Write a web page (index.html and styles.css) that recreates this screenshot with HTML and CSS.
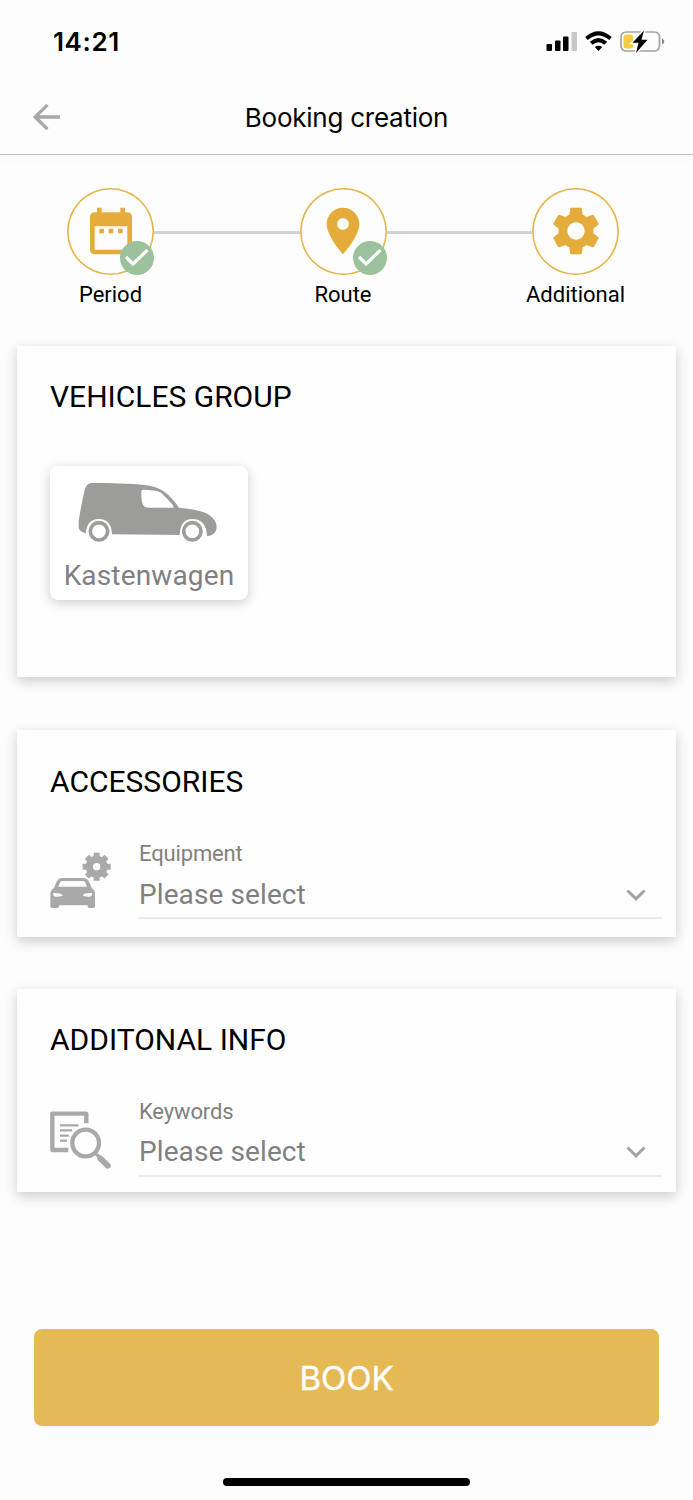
FILE: index.html
```html
<!DOCTYPE html>
<html lang="en">

	<head>
		<meta charset="UTF-8">
		<title>Booking creation</title>
		<link rel="stylesheet" href="styles.css">
	</head>

	<body>
		<div class="status">
			<span class="time">14:21</span>
			<svg class="status-icons" width="120" height="24" viewBox="0 0 120 24">
				<rect x="0.5" y="14" width="5.5" height="7" rx="1"/>
				<rect x="9" y="10.5" width="5.5" height="10.5" rx="1"/>
				<rect x="17" y="6.500" width="5.500" height="14.5" rx="1"/>
				<rect x="25.500" y="2" width="5.500" height="19" rx="1" fill="#c8c8c8"/>
				<g fill="none" stroke="#000" stroke-width="4">
					<path d="M40.500 8.500Q52.500 -1.800 64.500 8.500"/>
					<path d="M45.200 13.300Q52.500 7 59.800 13.300"/>
				</g>
				<path d="M48.800 17.100Q52.500 14.200 56.200 17.100L52.500 21Z"/>
				<rect x="75" y="2" width="38.500" height="19" rx="5" fill="none" stroke="#a3a3a3" stroke-width="1.700"/>
				<path d="M116 8.500q2.300 1 2.300 3t-2.300 3z" fill="#8a8a8a"/>
				<rect x="77.500" y="4.500" width="9.500" height="14" rx="2.500" fill="#f7cb46"/>
				<path d="M98 0.500L86.500 12.800H92.500L90 23L101.500 9.800H95.500Z" stroke="#fdfdfd" stroke-width="3"/>
				<path d="M98 0.500L86.500 12.800H92.500L90 23L101.500 9.800H95.500Z"/>
			</svg>
		</div>

		<div class="header">
			<svg class="back" width="28" height="28" viewBox="0 0 28 28">
				<path d="M27 14H2M14.500 1.800L2.200 14L14.500 26.200"/>
			</svg>
			<h1>Booking creation</h1>
		</div>

		<div class="steps">
			<div class="step">
				<div class="circle">
					<svg class="step-icon" viewBox="0 0 24 24">
						<path d="M9 11H7v2h2v-2zm4 0h-2v2h2v-2zm4 0h-2v2h2v-2zm2-7h-1V2h-2v2H8V2H6v2H5c-1.110 0-1.990.9-1.990 2L3 20c0 1.100.89 2 2 2h14c1.100 0 2-.9 2-2V6c0-1.100-.9-2-2-2zm0 16H5V10h14v10z"/>
					</svg>
					<svg class="check" viewBox="0 0 34 34">
						<circle cx="17" cy="17" r="17"/>
						<path d="M6 16L13 23L27.500 9"/>
					</svg>
				</div>
				<span>Period</span>
			</div>
			<div class="line"></div>
			<div class="step">
				<div class="circle">
					<svg class="step-icon" viewBox="0 0 24 24">
						<path d="M12 2C8.130 2 5 5.130 5 9c0 5.250 7 13 7 13s7-7.750 7-13c0-3.870-3.130-7-7-7zm0 9.500c-1.380 0-2.500-1.120-2.500-2.500s1.120-2.500 2.500-2.500 2.500 1.120 2.500 2.500-1.120 2.500-2.500 2.500z"/>
					</svg>
					<svg class="check" viewBox="0 0 34 34">
						<circle cx="17" cy="17" r="17"/>
						<path d="M6 16L13 23L27.500 9"/>
					</svg>
				</div>
				<span>Route</span>
			</div>
			<div class="line"></div>
			<div class="step">
				<div class="circle">
					<svg class="step-icon" viewBox="0 0 24 24">
						<path d="M19.430 12.980c.04-.32.07-.64.07-.98s-.03-.66-.07-.98l2.110-1.650c.19-.15.24-.42.12-.64l-2-3.460c-.12-.22-.39-.3-.61-.22l-2.490 1c-.52-.4-1.080-.73-1.690-.98l-.38-2.650C14.460 2.180 14.250 2 14 2h-4c-.25 0-.46.18-.49.42l-.38 2.650c-.61.25-1.170.59-1.690.98l-2.490-1c-.23-.09-.49 0-.61.22l-2 3.460c-.13.22-.07.49.12.64l2.110 1.650c-.04.32-.07.65-.07.98s.03.66.07.98l-2.110 1.650c-.19.15-.24.42-.12.64l2 3.460c.12.22.39.3.61.22l2.490-1c.52.4 1.080.73 1.690.98l.38 2.650c.03.24.24.42.49.42h4c.25 0 .46-.18.49-.42l.38-2.650c.61-.25 1.170-.59 1.690-.98l2.490 1c.23.09.49 0 .61-.22l2-3.460c.12-.22.07-.49-.12-.64l-2.110-1.650zM12 15.700c-2.040 0-3.700-1.660-3.700-3.700s1.660-3.700 3.700-3.700 3.700 1.660 3.700 3.700-1.660 3.700-3.700 3.700z"/>
					</svg>
				</div>
				<span>Additional</span>
			</div>
		</div>

		<div class="card vehicles">
			<h2>VEHICLES GROUP</h2>
			<div class="tile">
				<svg width="142" height="64" viewBox="54 30 426 192">
					<path fill="#9c9c9a" fill-rule="evenodd" d="M98 39C160 38 230 41 272 47Q297 51 316 65Q340 83 360 113Q400 116 430 125Q456 133 468 153Q475 165 472 178Q468 196 444 199Q442 147 399 147Q364 147 362 195L159 193Q157 147 120 147Q84 147 80 190Q61 184 59 174V154Q65 112 77 60Q82 40 98 39ZM252 59Q247 59 247 66Q246 99 255 109Q259 113 268 113H341Q346 113 342 106Q323 83 306 68Q294 60 252 59Z"/>
					<circle cx="120" cy="184" r="26" fill="none" stroke="#9c9c9a" stroke-width="11"/>
					<circle cx="400" cy="184" r="26" fill="none" stroke="#9c9c9a" stroke-width="11"/>
				</svg>
				<span>Kastenwagen</span>
			</div>
		</div>

		<div class="card accessories">
			<h2>ACCESSORIES</h2>
			<div class="row">
				<svg width="61" height="57" viewBox="150 96 183 171" fill="#a9a9a9">
					<path fill-rule="evenodd" d="M187 174H249Q262 174 268 187L275 204Q285 210 285 222V259Q285 264 280 264H267Q263 264 263 259V256H177V259Q177 264 172 264H156Q151 264 151 259V222Q151 210 162 204L169 187Q175 174 187 174ZM188 183Q181 183 179 190L175 200H261L257 190Q255 183 248 183ZM160 219Q158 229 167 230Q182 231 189 226Q181 217 160 219ZM276 219Q278 229 269 230Q254 231 247 226Q255 217 276 219Z"/>
					<circle cx="290" cy="140" r="22" fill="none" stroke="#a9a9a9" stroke-width="22"/>
					<path fill="none" stroke="#a9a9a9" stroke-width="18" d="M290 98V116M290 164V182M248 140H266M314 140H332M260.500 110.500L273 123M307 157L319.500 169.500M260.500 169.500L273 157M307 123L319.500 110.500"/>
				</svg>
				<div class="select">
					<label>Equipment</label>
					<div class="value">
						<span>Please select</span>
						<svg width="20" height="12" viewBox="0 0 20 12"><path d="M1.500 1.500L10 9.800L18.500 1.500"/></svg>
					</div>
				</div>
			</div>
		</div>

		<div class="card info">
			<h2>ADDITONAL INFO</h2>
			<div class="row">
				<svg width="61" height="58" viewBox="150 95 183 174" fill="none" stroke="#a9a9a9">
					<path stroke-width="13" stroke-linejoin="round" d="M259 132V103H157V212H205"/>
					<path stroke-width="7" d="M180 138H235M180 153H216M180 169H206M180 184H201"/>
					<circle cx="257" cy="191" r="40" stroke-width="13"/>
					<path stroke-width="10" d="M284 220L299 234"/>
					<path stroke-width="18" stroke-linecap="round" d="M301 237L323 259"/>
				</svg>
				<div class="select">
					<label>Keywords</label>
					<div class="value">
						<span>Please select</span>
						<svg width="20" height="12" viewBox="0 0 20 12"><path d="M1.500 1.500L10 9.800L18.500 1.500"/></svg>
					</div>
				</div>
			</div>
		</div>

		<button class="book">BOOK</button>
		<div class="home"></div>
	</body>

</html>
```
FILE: styles.css
```css
* {
	margin: 0;
	padding: 0;
	box-sizing: border-box;
}

body {
	width: 693px;
	height: 1500px;
	background: #fdfdfd;
	font-family: Roboto, sans-serif;
	color: #000;
	overflow: hidden;
}

svg {
	display: block;
	flex-shrink: 0;
}

.status {
	height: 80px;
	padding: 3px 27px 0 53px;
	display: flex;
	align-items: center;
	justify-content: space-between;
}

.time {
	font: 600 26px Inter, sans-serif;
	letter-spacing: 0.6px;
}

.status-icons {
	margin-top: 1px;
}

.header {
	height: 75px;
	padding: 0 34px;
	display: grid;
	grid-template-columns: 28px 1fr 28px;
	align-items: center;
	border-bottom: 1px solid #bdbdbd;
	box-shadow: 0 6px 6px rgba(0, 0, 0, 0.02);
}

.header h1 {
	font: 400 26px Inter, sans-serif;
	letter-spacing: -0.25px;
	text-align: center;
	padding-top: 1px;
}

.back {
	margin-left: -1px;
	fill: none;
	stroke: #a9a9a9;
	stroke-width: 3.3;
}

.steps {
	height: 191px;
	padding: 33px 74px 0 67px;
	display: flex;
	align-items: flex-start;
}

.step {
	width: 87px;
	display: flex;
	flex-direction: column;
	align-items: center;
}

.circle {
	width: 87px;
	height: 87px;
	border-radius: 50%;
	box-shadow: inset 0 0 0 1.6px #e6b548;
	display: flex;
	align-items: center;
	justify-content: center;
	position: relative;
}

.step-icon {
	width: 56px;
	height: 56px;
	margin-bottom: 1px;
	fill: #e4ad3b;
}

.check {
	position: absolute;
	right: 0;
	bottom: 0;
	width: 34px;
	height: 34px;
	fill: #9bc29d;
}

.check path {
	fill: none;
	stroke: #fff;
	stroke-width: 3.2;
}

.step span {
	margin-top: 7px;
	font-size: 22px;
	line-height: 26px;
	white-space: nowrap;
}

.line {
	flex: 1;
	height: 3px;
	margin-top: 43px;
	background: #d3d3d3;
}

.card {
	margin: 0 17px;
	padding: 33px 14px 0 33px;
	background: #fefefe;
	box-shadow: 0 4px 12px rgba(0, 0, 0, 0.2);
}

.card h2 {
	font-size: 30px;
	font-weight: 400;
	line-height: 36px;
}

.vehicles {
	height: 331px;
	margin-bottom: 53px;
}

.tile {
	width: 198px;
	height: 134px;
	margin-top: 51px;
	padding-top: 14px;
	display: flex;
	flex-direction: column;
	align-items: center;
	border-radius: 8px;
	background: #fff;
	box-shadow: 0 3px 12px rgba(0, 0, 0, 0.2);
}

.tile svg {
	margin-left: -2px;
}

.tile span {
	margin-top: 15px;
	font-size: 28px;
	line-height: 34px;
	letter-spacing: 0.15px;
	color: #808080;
}

.accessories {
	height: 207px;
	padding-top: 34px;
	margin-bottom: 52px;
}

.info {
	height: 203px;
	margin-bottom: 137px;
}

.row {
	margin-top: 40px;
	display: flex;
	align-items: flex-start;
	gap: 28px;
}

.row > svg {
	margin-top: 13px;
}

.accessories .row > svg {
	margin-top: 12px;
}

.select {
	flex: 1;
	height: 79px;
	padding-top: 1px;
	border-bottom: 2px solid #e9e9e9;
}

.select label {
	display: block;
	font-size: 22px;
	line-height: 26px;
	letter-spacing: -0.15px;
	color: #808080;
}

.value {
	margin-top: 10px;
	padding-right: 16px;
	display: flex;
	align-items: center;
	justify-content: space-between;
	font-size: 28px;
	line-height: 34px;
	letter-spacing: 0.1px;
	color: #808080;
}

.accessories .value {
	margin-top: 11px;
}

.value svg {
	fill: none;
	stroke: #a3a3a3;
	stroke-width: 3;
}

.book {
	display: block;
	width: 625px;
	height: 97px;
	margin: 0 34px 52px;
	border: none;
	border-radius: 8px;
	background: #e5b955;
	color: #fff;
	font: 400 33px Inter, sans-serif;
	-webkit-text-stroke: 0.4px #fff;
}

.home {
	width: 247px;
	height: 8px;
	margin: 0 auto;
	border-radius: 4px;
	background: #000;
}
```
